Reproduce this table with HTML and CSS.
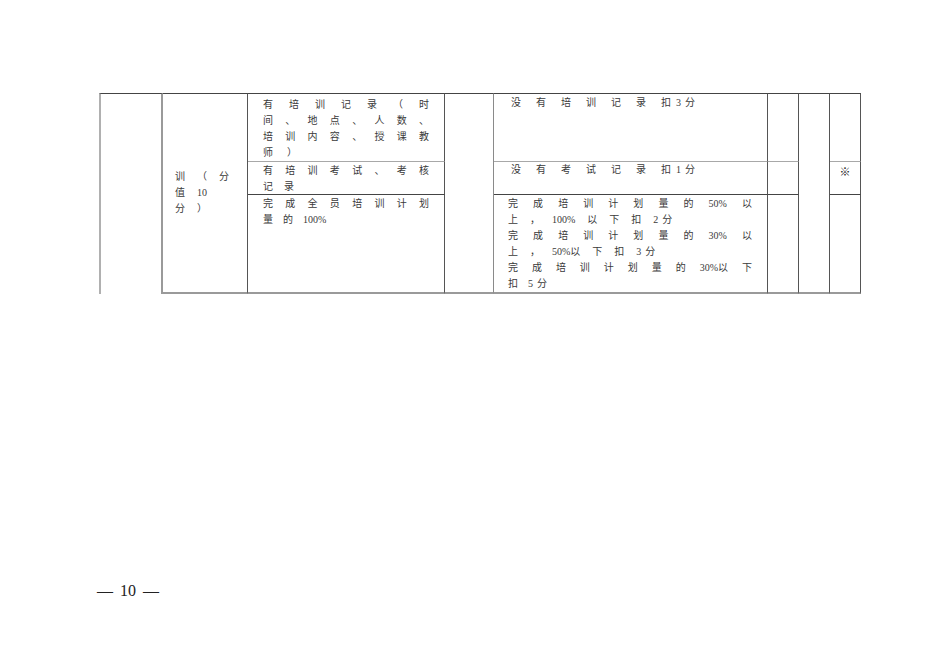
FILE: index.html
```html
<!DOCTYPE html>
<html lang="zh">
<head>
<meta charset="utf-8">
<title>培训</title>
<link rel="stylesheet" href="styles.css">
</head>
<body>
<div class="page">
  <div class="grid">
    <div class="cell c1 rall t lft"></div>
    <div class="cell c2 rall t b3 mid">
      <div class="ln g12"><span>训</span><span>（</span><span>分</span></div>
      <div class="ln g12"><span>值</span><span>10</span></div>
      <div class="ln g12"><span>分</span><span>）</span></div>
    </div>

    <div class="cell c3 r1 t b1 p3a">
      <div class="ln j"><span>有</span><span>培</span><span>训</span><span>记</span><span>录</span><span>（</span><span>时</span></div>
      <div class="ln j"><span>间</span><span>、</span><span>地</span><span>点</span><span>、</span><span>人</span><span>数</span><span>、</span></div>
      <div class="ln j"><span>培</span><span>训</span><span>内</span><span>容</span><span>、</span><span>授</span><span>课</span><span>教</span></div>
      <div class="ln g14"><span>师</span><span>）</span></div>
    </div>
    <div class="cell c3 r2 b2 p3b">
      <div class="ln j"><span>有</span><span>培</span><span>训</span><span>考</span><span>试</span><span>、</span><span>考</span><span>核</span></div>
      <div class="ln g11"><span>记</span><span>录</span></div>
    </div>
    <div class="cell c3 r3 b3 p3b">
      <div class="ln j"><span>完</span><span>成</span><span>全</span><span>员</span><span>培</span><span>训</span><span>计</span><span>划</span></div>
      <div class="ln g10"><span>量</span><span>的</span><span>100%</span></div>
    </div>

    <div class="cell c4 rall t b3 gr"></div>

    <div class="cell c5 r1 t b1 p5c">
      <div class="ln g15"><span>没</span><span>有</span><span>培</span><span>训</span><span>记</span><span>录</span><span>扣<b class="d">3</b>分</span></div>
    </div>
    <div class="cell c5 r2 b2 p5b">
      <div class="ln g15"><span>没</span><span>有</span><span>考</span><span>试</span><span>记</span><span>录</span><span>扣<b class="d">1</b>分</span></div>
    </div>
    <div class="cell c5 r3 b3 p5a">
      <div class="ln j"><span>完</span><span>成</span><span>培</span><span>训</span><span>计</span><span>划</span><span>量</span><span>的</span><span>50%</span><span>以</span></div>
      <div class="ln g12"><span>上</span><span>，</span><span>100%</span><span>以</span><span>下</span><span>扣</span><span><b class="e">2</b>分</span></div>
      <div class="ln j"><span>完</span><span>成</span><span>培</span><span>训</span><span>计</span><span>划</span><span>量</span><span>的</span><span>30%</span><span>以</span></div>
      <div class="ln g12"><span>上</span><span>，</span><span>50%以</span><span>下</span><span>扣</span><span><b class="e">3</b>分</span></div>
      <div class="ln j"><span>完</span><span>成</span><span>培</span><span>训</span><span>计</span><span>划</span><span>量</span><span>的</span><span>30%以</span><span>下</span></div>
      <div class="ln g10"><span>扣</span><span><b class="e">5</b>分</span></div>
    </div>

    <div class="cell c6 r1 t b1"></div>
    <div class="cell c6 r2 b2"></div>
    <div class="cell c6 r3 b3"></div>

    <div class="cell c7 rall t b3"></div>

    <div class="cell c8 r1 t b1"></div>
    <div class="cell c8 r2 b2 ctr">※</div>
    <div class="cell c8 r3 b3"></div>
  </div>

  <div class="pno">— 10 —</div>
</div>
</body>
</html>
```

FILE: styles.css
```css
* { box-sizing: border-box; }

body {
  margin: 0;
  background: #ffffff;
  color: #3a3a3a;
  font-family: "Liberation Serif", "Noto Sans CJK SC", serif;
}

.page {
  padding: 93px 0 0 99px;
}

.grid {
  display: grid;
  grid-template-columns: 64px 85px 197px 49px 274px 31px 31px 31px;
  grid-template-rows: 69px 33px 99px;
  width: 762px;
  font-size: 10px;
  line-height: 16px;
}

.cell { border-right: 1px solid #555555; }
.gr { border-right-color: #8a8a8a; }
.t { border-top: 1px solid #444444; }
.b1 { border-bottom: 1px solid #a8a8a8; }
.b2 { border-bottom: 1px solid #444444; }
.b3 { border-bottom: 2px solid #9a9a9a; }
.lft { border-left: 2px solid #b0b0b0; border-right: 2px solid #9a9a9a; }

.c1 { grid-column: 1; }
.c2 { grid-column: 2; }
.c3 { grid-column: 3; }
.c4 { grid-column: 4; }
.c5 { grid-column: 5; }
.c6 { grid-column: 6; }
.c7 { grid-column: 7; }
.c8 { grid-column: 8; }

.r1 { grid-row: 1; }
.r2 { grid-row: 2; }
.r3 { grid-row: 3; }
.rall { grid-row: 1 / 4; }

.mid {
  display: flex;
  flex-direction: column;
  justify-content: center;
  padding: 0 0 0 12px;
}

.p3a { padding: 3px 15px 0 15px; }
.p3b { padding: 1px 15px 0 15px; }
.p5a { padding: 1px 15px 0 14px; }
.p5b { padding: 0 15px 0 17px; }
.p5c { padding: 1px 15px 0 17px; }

.ln {
  display: flex;
  height: 16px;
  white-space: nowrap;
}
.j { justify-content: space-between; }
.g10 { gap: 10px; }
.g11 { gap: 11px; }
.g12 { gap: 12px; }
.g14 { gap: 14px; }
.g15 { gap: 15px; }

.d { font-weight: normal; margin: 0 4px 0 5px; }
.e { font-weight: normal; margin-right: 4px; }

.ctr {
  text-align: center;
  padding-top: 1px;
  font-family: "Noto Sans CJK SC", sans-serif;
  font-size: 11px;
  color: #222222;
}

.pno {
  margin-top: 287px;
  margin-left: -2px;
  font-size: 16px;
  line-height: 20px;
  color: #222222;
  word-spacing: 3px;
}
```
